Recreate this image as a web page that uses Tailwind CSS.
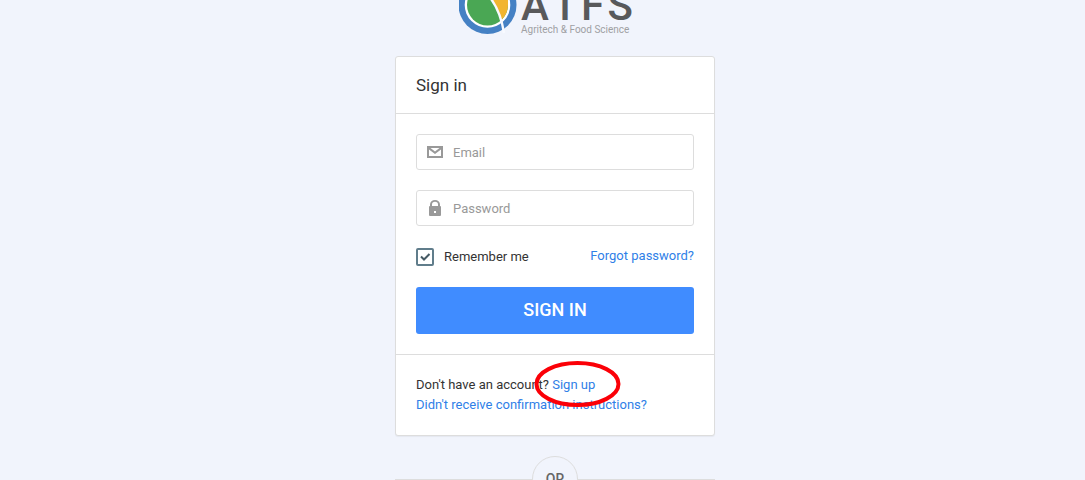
<!DOCTYPE html>
<html lang="en">
<head>
<meta charset="utf-8">
<meta name="viewport" content="width=device-width, initial-scale=1">
<title>Sign in</title>
<script src="https://cdn.jsdelivr.net/npm/@tailwindcss/browser@4"></script>
</head>
<body class="h-screen overflow-hidden bg-[#f1f4fc] pl-[25px] font-['Roboto',sans-serif] text-[13px] leading-5 text-[#333]">
<main class="mx-auto w-full max-w-80">
  <header class="flex h-14 items-start overflow-hidden pl-16">
    <svg class="h-9 w-[58px] shrink-0" viewBox="0 0 58 36" aria-hidden="true">
      <circle cx="28.5" cy="5" r="29" fill="#4581c4"/>
      <circle cx="28.5" cy="5" r="22.8" fill="#fff"/>
      <circle cx="28.5" cy="5" r="20.5" fill="#4aa754"/>
      <path d="M28 -6Q39 5 42.500 19.800A20.5 20.5 0 0 0 49 5V-6Z" fill="#f2b52f"/>
      <path d="M28 -6Q41 8 45 33" fill="none" stroke="#f8faff" stroke-width="2.4"/>
    </svg>
    <div class="ml-1 flex h-9 w-28 shrink-0 flex-col justify-end">
      <div class="flex justify-between text-[42px] leading-9 font-medium text-[#58595b]" aria-label="ATFS"><span>A</span><span>T</span><span>F</span><span>S</span></div>
      <p class="text-[10px] leading-3 whitespace-nowrap text-[#9fa0a3]">Agritech &amp; Food Science</p>
    </div>
  </header>

  <form class="rounded-[3px] border border-[#ddd] bg-white shadow-[0_1px_1px_rgba(0,0,0,0.05)]">
    <h1 class="border-b border-[#ddd] px-5 py-[18px] text-[17px] leading-5">Sign in</h1>
    <div class="p-5">
      <label class="flex h-9 items-center rounded-[3px] border border-[#ddd] px-2.5">
        <svg class="size-4 shrink-0" viewBox="0 0 16 16" fill="#999" aria-hidden="true"><path fill-rule="evenodd" d="M0 2H16V14H0ZM2 4V12H14V4Z"/><path d="M2 4H3.500L8 7.500L12.500 4H14V5.500L8 10L2 5.500Z"/></svg>
        <input type="email" aria-label="Email" placeholder="Email" class="ml-2.5 min-w-0 flex-1 pt-px outline-none placeholder:text-[#999]">
      </label>
      <label class="mt-5 flex h-9 items-center rounded-[3px] border border-[#ddd] px-2.5">
        <svg class="size-4 shrink-0" viewBox="0 0 16 16" fill="#999" aria-hidden="true"><path fill-rule="evenodd" d="M3 6V4.500A5 4.500 0 0 1 13 4.500V6Q14 6 14 7V15Q14 16 13 16H3Q2 16 2 15V7Q2 6 3 6ZM5 6H11V4.500A3 2.700 0 0 0 5 4.500ZM7 11V13H9V11Z"/></svg>
        <input type="password" aria-label="Password" placeholder="Password" class="ml-2.5 min-w-0 flex-1 pt-px outline-none placeholder:text-[#999]">
      </label>
      <div class="mt-5 flex items-start justify-between">
        <label class="flex items-center pt-px">
          <span class="grid size-[18px] place-items-center">
            <input type="checkbox" checked class="peer col-start-1 row-start-1 size-[18px] appearance-none rounded-xs border-2 border-[#607d8b]">
            <svg class="pointer-events-none invisible col-start-1 row-start-1 size-3 peer-checked:visible" viewBox="0 0 12 12" fill="none" stroke="#455a64" stroke-width="2" aria-hidden="true"><path d="M2 5.500L5 8.500L10.500 3"/></svg>
          </span>
          <span class="ml-2.5">Remember me</span>
        </label>
        <a href="#" class="text-[#2f80e7]">Forgot password?</a>
      </div>
      <button type="submit" class="mt-5 h-[47px] w-full rounded-[3px] bg-[#408cff] pb-0.5 text-lg font-medium text-white">SIGN IN</button>
    </div>
    <div class="border-t border-[#ddd] p-5">
      <p>Don't have an account?
        <span class="relative inline-block"><a href="#" class="text-[#2f80e7]">Sign up</a>
          <svg class="pointer-events-none absolute -top-[14px] -left-[18px] h-[47px] w-[87px] max-w-none" viewBox="0 0 87 47" fill="none" stroke="#fb0007" stroke-width="4" aria-hidden="true"><ellipse cx="43.500" cy="23" rx="41" ry="21"/></svg>
        </span>
      </p>
      <a href="#" class="text-[#2f80e7]">Didn't receive confirmation instructions?</a>
    </div>
  </form>

  <div class="mt-5 flex items-center">
    <span class="h-px flex-1 bg-[#ddd]"></span>
    <span class="flex size-[46px] items-center justify-center rounded-full border border-[#ddd] text-sm font-medium text-[#666]">OR</span>
    <span class="h-px flex-1 bg-[#ddd]"></span>
  </div>
</main>
</body>
</html>
